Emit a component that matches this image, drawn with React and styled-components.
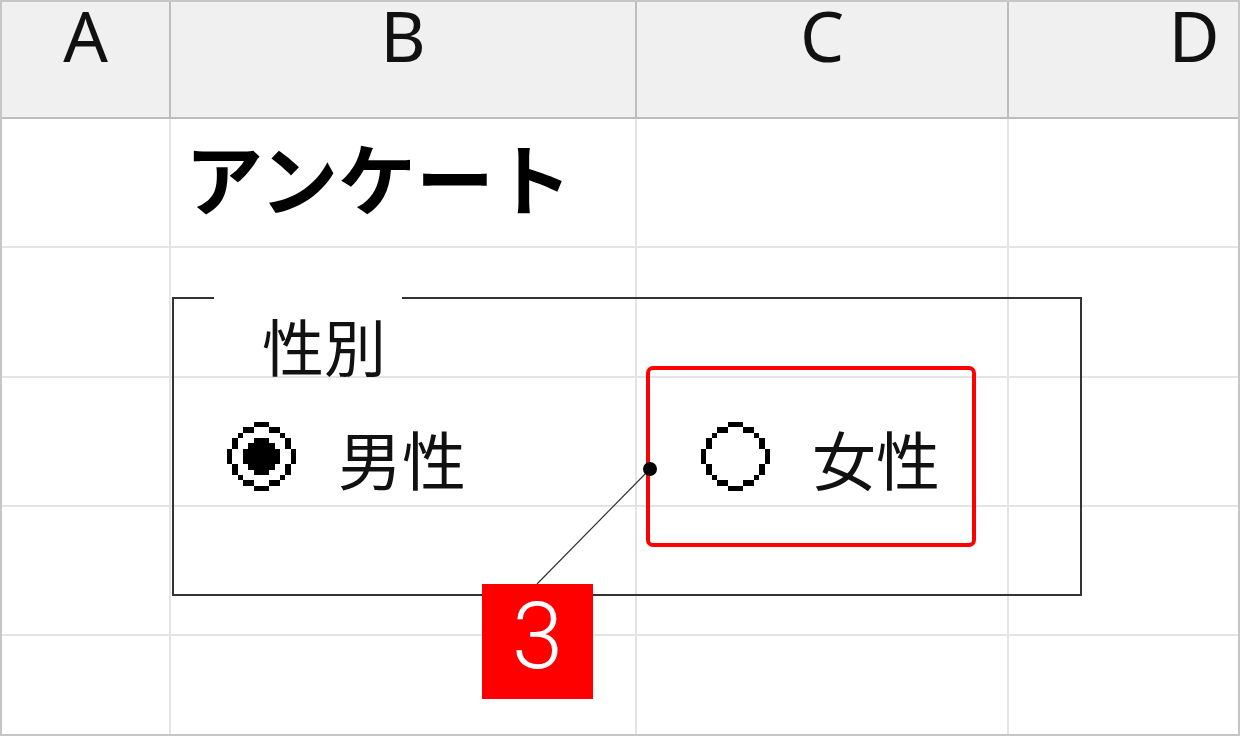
import styled, { createGlobalStyle } from 'styled-components';

const gridLine = '#e4e4e4';
const headLine = '#bdbdbd';
const red = '#ff0000';

const GlobalStyle = createGlobalStyle`
  html, body {
    margin: 0;
    padding: 0;
    background: white;
  }
  body {
    font-family: 'Noto Sans CJK JP', 'Noto Sans', sans-serif;
    color: #111;
  }
`;

const SheetSC = styled.div`
  position: relative;
  width: 1240px;
  height: 736px;
  box-sizing: border-box;
  border: 2px solid #c6c6c6;
  overflow: hidden;
  display: grid;
  grid-template-columns: 169px 466px 372px 372px;
  grid-template-rows: 117px 129px 130px 129px 129px 1fr;
`;

const HeadCellSC = styled.div`
  box-sizing: border-box;
  padding-top: 3px;
  background: #f0f0f0;
  border-right: 2px solid ${headLine};
  border-bottom: 2px solid ${headLine};
  font-family: 'Noto Sans', 'Open Sans', sans-serif;
  font-size: 70px;
  line-height: 60px;
  text-align: center;
  color: #111;
`;

const CellSC = styled.div`
  box-sizing: border-box;
  border-right: 2px solid ${gridLine};
  border-bottom: ${(p) => (p.last ? 'none' : `2px solid ${gridLine}`)};
  display: flex;
  align-items: center;
`;

const TitleSC = styled.span`
  padding: 0 0 14px 14px;
  font-size: 78px;
  line-height: 1;
  font-weight: 700;
  color: #000;
`;

const GroupBoxSC = styled.fieldset`
  position: absolute;
  left: 170px;
  top: 295px;
  width: 910px;
  height: 299px;
  box-sizing: border-box;
  margin: 0;
  padding: 0;
  border: 2px solid #333;
  min-width: 0;
`;

const LegendSC = styled.legend`
  margin-left: 40px;
  width: 188px;
  height: 0;
  padding: 0;
  font-size: 0;
  line-height: 0;
`;

const CaptionSC = styled.div`
  margin: 15px 0 0 88px;
  font-size: 62px;
  line-height: 62px;
  color: #111;
`;

const OptionsSC = styled.div`
  display: flex;
  margin-top: 46px;
  padding-left: 53px;
`;

const OptionSC = styled.div`
  display: flex;
  align-items: center;
  gap: 42px;
  width: ${(p) => p.width}px;
`;

const OptionTextSC = styled.span`
  font-size: 64px;
  line-height: 64px;
  color: #111;
`;

const HighlightSC = styled.div`
  position: absolute;
  left: 644px;
  top: 364px;
  width: 330px;
  height: 181px;
  box-sizing: border-box;
  border: 4px solid ${red};
  border-radius: 7px;
`;

const ConnectorSC = styled.svg`
  position: absolute;
  left: 528px;
  top: 458px;
  overflow: visible;
`;

const BadgeSC = styled.div`
  position: absolute;
  left: 480px;
  top: 582px;
  width: 111px;
  height: 115px;
  box-sizing: border-box;
  padding-bottom: 10px;
  background: ${red};
  color: white;
  display: flex;
  align-items: center;
  justify-content: center;
  font-family: Roboto, 'Liberation Sans', sans-serif;
  font-weight: 300;
  font-size: 92px;
  line-height: 1;
`;

// 13x13 pixel ring like the old Windows form-control radio
const ring = [
  '.....###.....',
  '...##...##...',
  '..#.......#..',
  '.#.........#.',
  '.#.........#.',
  '#...........#',
  '#...........#',
  '#...........#',
  '.#.........#.',
  '.#.........#.',
  '..#.......#..',
  '...##...##...',
  '.....###.....'
];

const dot = [
  [3, 5, 7],
  [4, 4, 8],
  [5, 3, 9],
  [6, 3, 9],
  [7, 3, 9],
  [8, 4, 8],
  [9, 5, 7]
];

const Radio = ({ checked }) => (
  <svg width="69" height="69" viewBox="0 0 13 13" shapeRendering="crispEdges">
    {ring.map((row, y) =>
      row
        .split('')
        .map((c, x) =>
          c === '#' ? <rect key={`${x}-${y}`} x={x} y={y} width="1" height="1" fill="#000" /> : null
        )
    )}
    {checked &&
      dot.map(([y, a, b]) => (
        <rect key={`d${y}`} x={a} y={y} width={b - a + 1} height="1" fill="#000" />
      ))}
  </svg>
);

const cols = ['A', 'B', 'C', 'D'];
const rows = [0, 1, 2, 3, 4];

export default function App() {
  return (
    <>
      <GlobalStyle />
      <SheetSC>
        {cols.map((c) => (
          <HeadCellSC key={c}>{c}</HeadCellSC>
        ))}
        {rows.map((r) =>
          cols.map((c) => (
            <CellSC key={`${c}${r}`} last={r === rows.length - 1}>
              {r === 0 && c === 'B' && <TitleSC>アンケート</TitleSC>}
            </CellSC>
          ))
        )}

        <GroupBoxSC>
          <LegendSC />
          <CaptionSC>性別</CaptionSC>
          <OptionsSC>
            <OptionSC width={474}>
              <Radio checked />
              <OptionTextSC>男性</OptionTextSC>
            </OptionSC>
            <OptionSC width={300}>
              <Radio />
              <OptionTextSC>女性</OptionTextSC>
            </OptionSC>
          </OptionsSC>
        </GroupBoxSC>

        <HighlightSC />
        <ConnectorSC width="130" height="130">
          <line x1="120" y1="9" x2="7" y2="124" stroke="#333" strokeWidth="1.2" />
          <circle cx="120" cy="9" r="7" fill="#000" />
        </ConnectorSC>
        <BadgeSC>3</BadgeSC>
      </SheetSC>
    </>
  );
}
